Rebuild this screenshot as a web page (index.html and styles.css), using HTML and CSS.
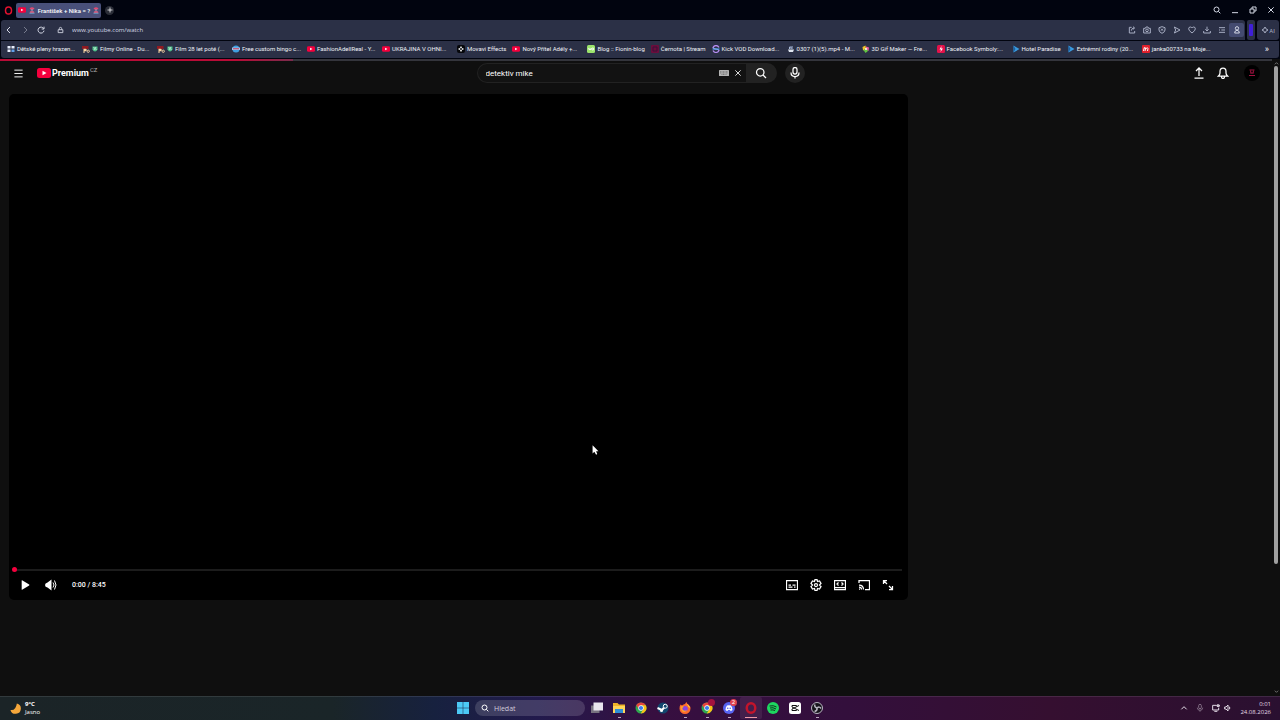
FILE: index.html
```html
<!DOCTYPE html>
<html lang="cs">
<head>
    <meta charset="UTF-8">
    <meta name="viewport" content="width=device-width, initial-scale=1.0">
    <title>František + Nika = ?</title>
    <link rel="stylesheet" href="styles.css">
</head>
<body>

<svg class="sprite" aria-hidden="true">
    <symbol id="yt" viewBox="0 0 28 20">
        <rect width="28" height="20" rx="5" fill="#f5003d"/>
        <path d="M11 5.5v9l8-4.5z" fill="#fff"/>
    </symbol>
    <symbol id="beach" viewBox="0 0 12 14">
        <path d="M1 3q5-5 10 0l-2 2H3z" fill="#e04a72"/>
        <path d="M6 4v7" stroke="#d9c9d8" stroke-width="1.4"/>
        <path d="M3 8h6l2 4H1z" fill="#c85c80"/>
        <path d="M1 12.6h10" stroke="#79b4dc" stroke-width="1.4"/>
    </symbol>
    <symbol id="po" viewBox="0 0 16 16">
        <path d="M0 2h13v6H0z" fill="#8f1a22"/>
        <path d="M3 7.5h4a2 2 0 0 1 0 5H5V16H3z" fill="#ffd9a5"/>
        <circle cx="12.5" cy="12.500" r="2.300" fill="none" stroke="#ffd9a5" stroke-width="1.800"/>
    </symbol>
    <symbol id="leaf" viewBox="0 0 12 12">
        <path d="M1 1h10v6q-2 4-5 4T1 7z" fill="#4fc08a"/>
        <path d="M3 2l6 6M8 2L4 8" stroke="#d8f4e4" stroke-width="1.4"/>
    </symbol>
    <symbol id="prima" viewBox="0 0 16 16">
        <path d="M3 1l12 7-12 7z" fill="#3a9be0"/>
        <path d="M3 1v14l4-7z" fill="#1d5f9e"/>
    </symbol>
    <symbol id="chrome" viewBox="0 0 24 24">
        <circle cx="12" cy="12" r="11" fill="#2fa84f"/>
        <path d="M2.5 6.5A11 11 0 0 1 21.5 6.5L12 7 7.6 14.5z" fill="#e8453c"/>
        <path d="M21.5 6.5A11 11 0 0 1 11.5 23L16.5 14.5 12 6.5z" fill="#fbc116"/>
        <circle cx="12" cy="12" r="5.4" fill="#fff"/>
        <circle cx="12" cy="12" r="4.2" fill="#3b7ded"/>
    </symbol>
    <symbol id="lens" viewBox="0 0 24 24">
        <circle cx="10.5" cy="10.5" r="7.5"/>
        <path d="M16 16l6 6"/>
    </symbol>
    <symbol id="cross" viewBox="0 0 24 24">
        <path d="M4 4l16 16M20 4L4 20"/>
    </symbol>
</svg>

<header class="browser">
    <div class="tabs">
        <button class="menu-opera" aria-label="Opera"><svg viewBox="0 0 24 24"><ellipse cx="12" cy="12" rx="8" ry="9.5" fill="none" stroke="#e3122f" stroke-width="4"/></svg></button>
        <div class="tab">
            <svg class="tab-icon"><use href="#yt"/></svg>
            <svg class="emoji"><use href="#beach"/></svg>
            <span>František + Nika = ?</span>
            <svg class="emoji"><use href="#beach"/></svg>
        </div>
        <button class="new-tab" aria-label="Nová karta"><svg class="line" viewBox="0 0 24 24"><path d="M12 2v20M2 12h20"/></svg></button>
        <div class="window-buttons">
            <button aria-label="Hledat karty"><svg class="line"><use href="#lens"/></svg></button>
            <button aria-label="Minimalizovat"><svg class="line" viewBox="0 0 24 24"><path d="M3 20h18"/></svg></button>
            <button aria-label="Obnovit"><svg class="line" viewBox="0 0 24 24"><path d="M3 9h12v12H3zM9 9V3h12v12h-6"/></svg></button>
            <button aria-label="Zavřít"><svg class="line"><use href="#cross"/></svg></button>
        </div>
    </div>

    <div class="toolbar">
        <div class="address">
            <button aria-label="Zpět"><svg class="line" viewBox="0 0 24 24"><path d="M15 3l-9 9 9 9"/></svg></button>
            <button class="dim" aria-label="Vpřed"><svg class="line" viewBox="0 0 24 24"><path d="M9 3l9 9-9 9"/></svg></button>
            <button aria-label="Obnovit stránku"><svg class="line" viewBox="0 0 24 24"><path d="M20 8a9 9 0 1 0 1 6M21 2v7h-7"/></svg></button>
            <svg class="line lock" viewBox="0 0 24 24"><path d="M4 11h16v10H4zM8 11V7q0-4 4-4t4 4v4"/></svg>
            <input class="url" type="text" value="www.youtube.com/watch" aria-label="Adresa">
            <div class="tools">
                <button aria-label="Upravit"><svg class="line" viewBox="0 0 24 24"><path d="M11 4H4v17h16v-6M10 14q0-7 8-8M15 2l5 4-5 4"/></svg></button>
                <button aria-label="Snímek"><svg class="line" viewBox="0 0 24 24"><path d="M2 7h5l2-4h6l2 4h5v14H2z"/><circle cx="12" cy="13" r="4"/></svg></button>
                <button aria-label="Blokování"><svg class="line" viewBox="0 0 24 24"><path d="M12 2l9 3v7q0 6-9 10-9-4-9-10V5z"/><path d="M9 8l6 6M15 8l-6 6"/></svg></button>
                <button aria-label="Tok"><svg class="line" viewBox="0 0 24 24"><path d="M4 3l17 9-17 9 4-9z"/></svg></button>
                <button aria-label="Oblíbené"><svg class="line" viewBox="0 0 24 24"><path d="M12 21Q2 14 2 8.500 2 3 7 3q3 0 5 3 2-3 5-3 5 0 5 5.500Q22 14 12 21z"/></svg></button>
                <button aria-label="Stahování"><svg class="line" viewBox="0 0 24 24"><path d="M12 2v13M7 10l5 5 5-5M2 15v6h20v-6"/></svg></button>
                <button aria-label="Seznam"><svg class="line" viewBox="0 0 24 24"><path d="M3 5h18M3 12h3M10 12h11M3 19h18"/></svg></button>
                <button class="profile" aria-label="Profil"><svg class="line" viewBox="0 0 24 24"><circle cx="12" cy="7" r="5"/><path d="M5 21q0-8 7-8t7 8z"/></svg></button>
            </div>
        </div>
        <div class="stripe"></div>
        <button class="ai"><svg class="line" viewBox="0 0 24 24"><path d="M12 3q2 7 9 9-7 2-9 9-2-7-9-9 7-2 9-9z"/></svg>AI</button>
    </div>

    <nav class="bookmarks">
        <a href="#" class="cut"><svg viewBox="0 0 16 16"><path d="M1 2h6v5H1zM9 2h6v5H9zM1 9h6v5H1z" fill="#e8eefc"/><path d="M9 9h6v5H9z" fill="#62a0ea"/></svg><span>Dětské pleny hrazen...</span></a>
        <a href="#" class="cut"><svg><use href="#po"/></svg><svg class="leaf"><use href="#leaf"/></svg><span>Filmy Online - Du...</span></a>
        <a href="#" class="cut"><svg><use href="#po"/></svg><svg class="leaf"><use href="#leaf"/></svg><span>Film 28 let poté (...</span></a>
        <a href="#" class="cut"><svg viewBox="0 0 16 16"><circle cx="8" cy="8" r="7" fill="#3f9fe0"/><path d="M0 5h16v5H0z" fill="#9cc6ee"/><path d="M2 7.500h12" stroke="#d33a55" stroke-width="2"/></svg><span>Free custom bingo c...</span></a>
        <a href="#" class="cut"><svg><use href="#yt"/></svg><span>FashionAdellReal - Y...</span></a>
        <a href="#" class="cut"><svg><use href="#yt"/></svg><span>UKRAJINA V OHNI...</span></a>
        <a href="#"><svg viewBox="0 0 16 16"><rect width="16" height="16" rx="4" fill="#05060a"/><path d="M8 2l2 3-2 2-2-2zM8 9l2 2-2 3-2-3zM2 8l3-2 2 2-2 2zM9 8l2-2 3 2-3 2z" fill="#fff"/></svg><span>Movavi Effects</span></a>
        <a href="#" class="cut"><svg><use href="#yt"/></svg><span>Nový Přítel Adély +...</span></a>
        <a href="#"><svg viewBox="0 0 16 16"><rect width="16" height="16" rx="3" fill="#9be36c"/><path d="M3 6l1.500 4L6 7l1.500 3L9 6M13 6h-3v4h3z" fill="none" stroke="#fff" stroke-width="1.500"/></svg><span>Blog :: Fionin-blog</span></a>
        <a href="#"><svg viewBox="0 0 16 16"><rect width="16" height="16" rx="2" fill="#6b0d3c"/><path d="M4 4h8v8H4z" fill="none" stroke="#3a1238" stroke-width="2"/></svg><span>Černota | Stream</span></a>
        <a href="#" class="cut"><svg viewBox="0 0 16 16"><path d="M14 5q-2-4-6-4T2 5q1 3 6 3t6 3q-2 4-6 4t-6-4" fill="none" stroke="#b58cf0" stroke-width="2.500"/><path d="M1 8h14" stroke="#41b4ee" stroke-width="2"/></svg><span>Kick VOD Download...</span></a>
        <a href="#" class="cut"><svg viewBox="0 0 16 16"><path d="M2 9h12l-2 5H4z" fill="#dfe5ef"/><path d="M5 8V4h3v4M10 8V2" stroke="#a9b9d8" stroke-width="2" fill="none"/></svg><span>0307 (1)(5).mp4 - M...</span></a>
        <a href="#" class="cut"><svg viewBox="0 0 16 16"><path d="M1 4l6-3 1 7-6 3z" fill="#f3c529"/><path d="M8 3l6 2-1 7-5-2z" fill="#ec5b9a"/><path d="M3 10l6-3 3 5-5 4z" fill="#62c544"/><circle cx="8" cy="8" r="2" fill="#fff"/></svg><span>3D Gif Maker — Fre...</span></a>
        <a href="#" class="cut"><svg viewBox="0 0 16 16"><rect width="16" height="16" rx="3" fill="#e4124a"/><path d="M9 2L5 9h3l-1 5 5-7H8.500z" fill="#fff"/></svg><span>Facebook Symboly:...</span></a>
        <a href="#"><svg><use href="#prima"/></svg><span>Hotel Paradise</span></a>
        <a href="#" class="cut"><svg><use href="#prima"/></svg><span>Extrémní rodiny (20...</span></a>
        <a href="#" class="cut"><svg viewBox="0 0 16 16"><rect width="16" height="16" rx="2" fill="#e0202c"/><path d="M3 12l1.500-7M4 6q4-2 3 2l-1 4M8 7q4-3 4 0l-1 5" fill="none" stroke="#fff" stroke-width="2"/></svg><span>janka00733 na Moje...</span></a>
        <button class="more" aria-label="Další záložky">»</button>
    </nav>
</header>

<div class="viewport">
    <div class="page">
        <div class="loading"><div class="loading-done"></div></div>

        <div class="masthead">
            <div class="masthead-start">
                <button class="burger" aria-label="Průvodce"><svg class="line" viewBox="0 0 24 24"><path d="M1 3h22M1 12h22M1 21h22"/></svg></button>
                <a class="logo" href="#"><svg><use href="#yt"/></svg><span>Premium</span><sup>CZ</sup></a>
            </div>
            <form class="search">
                <div class="search-box">
                    <input type="text" value="detektiv mike" aria-label="Hledat">
                    <svg class="keyboard" viewBox="0 0 20 12"><rect width="20" height="12" rx="1" fill="#b4b4b4"/><path d="M2 3.500h16M2 6h16M5 9h10" stroke="#444" stroke-width="1" stroke-dasharray="2 1"/></svg>
                    <button type="button" class="clear" aria-label="Vymazat"><svg class="line"><use href="#cross"/></svg></button>
                </div>
                <button type="button" class="search-go" aria-label="Hledat"><svg class="line"><use href="#lens"/></svg></button>
                <button type="button" class="mic" aria-label="Hlasové hledání"><svg class="line" viewBox="0 0 24 24"><rect x="8" y="1" width="8" height="13" rx="4"/><path d="M4 11q0 8 8 8t8-8M12 19v4"/></svg></button>
            </form>
            <div class="masthead-end">
                <button aria-label="Nahrát"><svg class="line" viewBox="0 0 24 24"><path d="M12 18V2M6 8l6-6 6 6M3 22h18"/></svg></button>
                <button aria-label="Oznámení"><svg class="line" viewBox="0 0 24 24"><path d="M3 18q3-3 3-6V9q0-7 6-7t6 7v3q0 3 3 6zM9 19q0 4 3 4t3-4"/></svg></button>
                <button class="avatar" aria-label="Účet"><svg viewBox="0 0 16 16"><path d="M3 2h10M5 3l1 6M11 3l-1 6M5 8h6M2 13h12" fill="none" stroke="#a01240" stroke-width="2"/></svg></button>
            </div>
        </div>

        <main class="watch">
            <div class="player">
                <div class="seek"><span class="knob"></span></div>
                <div class="controls">
                    <button class="play" aria-label="Přehrát"><svg viewBox="0 0 24 24"><path d="M4 2q0-2 2-1l16 10q1 1 0 2L6 23q-2 1-2-1z" fill="#fff"/></svg></button>
                    <button class="volume" aria-label="Ztlumit"><svg viewBox="0 0 24 24"><path d="M13 1v22L5 17Q0 16 0 12t5-5z" fill="#fff"/><path d="M16 7q4 5 0 10M19 3q6 9 0 18" fill="none" stroke="#fff" stroke-width="2"/></svg></button>
                    <span class="time">0:00 / 8:45</span>
                    <div class="controls-end">
                        <button aria-label="Titulky"><svg class="line" viewBox="0 0 24 24"><path d="M1 3h22v18H1zM5 12h5M13 12h6M5 16h8M16 16h3"/></svg></button>
                        <button aria-label="Nastavení"><svg class="line" viewBox="0 0 24 24"><path d="M10 1h4l1 4 4-1 3 5-3 3 3 3-3 5-4-1-1 4h-4l-1-4-4 1-3-5 3-3-3-3 3-5 4 1z"/><circle cx="12" cy="12" r="3"/></svg></button>
                        <button aria-label="Režim kina"><svg class="line" viewBox="0 0 24 24"><path d="M1 3h22v18H1zM1 17h22M9 7l-3 3 3 3M15 7l3 3-3 3"/></svg></button>
                        <button aria-label="Odeslat"><svg class="line" viewBox="0 0 24 24"><path d="M2 8V3h21v18h-9M2 12q9 0 9 9M2 16q5 0 5 5M2 20h2"/></svg></button>
                        <button aria-label="Celá obrazovka"><svg class="line" viewBox="0 0 24 24"><path d="M3 10V3h7M3 3l7 7M21 14v7h-7M21 21l-7-7"/></svg></button>
                    </div>
                </div>
            </div>
            <aside class="related"></aside>
        </main>
    </div>
    <div class="scrollbar">
        <svg class="line" viewBox="0 0 24 24"><path d="M4 16l8-8 8 8"/></svg>
        <div class="track"><div class="thumb"></div></div>
        <svg class="line" viewBox="0 0 24 24"><path d="M4 8l8 8 8-8"/></svg>
    </div>
</div>

<footer class="taskbar">
    <div class="weather">
        <svg viewBox="0 0 24 24"><path d="M15 1a11.500 11.500 0 1 1-14 14q11 3 14-14z" fill="#f5a73b"/></svg>
        <div><b>9°C</b><br>Jasno</div>
    </div>
    <div class="apps">
        <button aria-label="Start"><svg viewBox="0 0 24 24"><path d="M0 0h11.500v11.500H0zM12.500 0H24v11.500H12.500zM0 12.500h11.500V24H0zM12.500 12.500H24V24H12.500z" fill="#4cc9f5"/></svg></button>
        <label class="find"><svg class="line"><use href="#lens"/></svg><input type="text" placeholder="Hledat" aria-label="Hledat"></label>
        <button aria-label="Zobrazení úloh"><svg viewBox="0 0 24 24"><path d="M0 7h17v15H0z" fill="#77727f"/><path d="M5 1h19v16H5z" fill="#e9e6ee"/></svg></button>
        <button class="open" aria-label="Průzkumník"><svg viewBox="0 0 24 24"><path d="M0 2h9l3 3h12v17H0z" fill="#f0b429"/><path d="M0 8h24v14H0z" fill="#ffd55a"/><path d="M4 14h16v8H4z" fill="#2f8fd8"/></svg></button>
        <button aria-label="Chrome"><svg><use href="#chrome"/></svg></button>
        <button aria-label="Steam"><svg viewBox="0 0 24 24"><circle cx="12" cy="12" r="11" fill="#12476f"/><path d="M1 12l9 4 6-7" fill="none" stroke="#fff" stroke-width="4"/><circle cx="16.500" cy="8.500" r="4" fill="#12476f" stroke="#fff" stroke-width="2"/><circle cx="9" cy="17" r="3" fill="#fff"/></svg></button>
        <button class="open" aria-label="Firefox"><svg viewBox="0 0 24 24"><path d="M3 5l3 2q3-3 6-3 1-2 3-4 1 4 4 5 4 4 4 8a11 11 0 0 1-22 0q0-5 2-8z" fill="#ff6b2c"/><path d="M14 3q8 4 8 9l-3-2q-1-4-5-7z" fill="#ffd43a"/><circle cx="12" cy="13.500" r="5.500" fill="#8a46e0"/><path d="M3 9q4-2 7 1-5 1-3 5 3 4 9 1-3 6-9 3-5-4-4-10z" fill="#ffa32b"/></svg></button>
        <button class="open" aria-label="Chrome, profil"><svg><use href="#chrome"/></svg><span class="badge"></span></button>
        <button class="open" aria-label="Discord"><svg viewBox="0 0 24 24"><circle cx="12" cy="12" r="12" fill="#5865f2"/><path d="M5 16q0-6 3-9 4-1 8 0 3 3 3 9-2 2-4 2l-1-2h-4l-1 2q-2 0-4-2z" fill="#fff"/><circle cx="9.500" cy="12.500" r="1.600" fill="#5865f2"/><circle cx="14.500" cy="12.500" r="1.600" fill="#5865f2"/></svg><span class="badge bright">2</span></button>
        <button class="active" aria-label="Opera"><svg viewBox="0 0 24 24"><ellipse cx="12" cy="12" rx="8.500" ry="9.500" fill="none" stroke="#c3142b" stroke-width="5"/></svg></button>
        <button aria-label="Spotify"><svg viewBox="0 0 24 24"><circle cx="12" cy="12" r="12" fill="#1ed760"/><path d="M5 8q8-2 14 2M6 12q6-2 12 2M7 16q5-1 9 1" fill="none" stroke="#10321c" stroke-width="2"/></svg></button>
        <button aria-label="CapCut"><svg viewBox="0 0 24 24"><rect width="24" height="24" rx="5" fill="#fff"/><path d="M15 9V7H6v3l14 7M15 15v2H6v-3l14-7" fill="none" stroke="#111" stroke-width="2"/></svg></button>
        <button class="open" aria-label="OBS"><svg viewBox="0 0 24 24"><circle cx="12" cy="12" r="11" fill="#17151c" stroke="#b9b5c2" stroke-width="2"/><path d="M12 12q-6-2-4-7M12 12q5-4 8 1M12 12q1 6-5 7" fill="none" stroke="#b9b5c2" stroke-width="3"/></svg></button>
    </div>
    <div class="tray">
        <svg class="line" viewBox="0 0 24 24"><path d="M4 16l8-8 8 8"/></svg>
        <svg class="line dim" viewBox="0 0 24 24"><rect x="8" y="1" width="8" height="13" rx="4"/><path d="M4 11q0 8 8 8t8-8M12 19v4"/></svg>
        <div class="net">
            <svg class="line" viewBox="0 0 24 24"><path d="M14 4H2v14h18v-7M7 22h9M18 1v8M15 3h7v4h-7z"/></svg>
            <svg class="line" viewBox="0 0 24 24"><path d="M2 9h4l6-6v18l-6-6H2zM16 8q3 4 0 8"/></svg>
        </div>
        <div class="clock">0:01<br>24.08.2026</div>
    </div>
</footer>

<svg class="cursor" viewBox="0 0 12 18"><path d="M1 1v14l3-3 3 5 2-1-2-5h4z" fill="#fff"/></svg>

</body>
</html>
```
FILE: styles.css
```css
* {
    box-sizing: border-box;
}
body {
    margin: 0;
    height: 100vh;
    display: flex;
    flex-direction: column;
    background: #0f0f0f;
    color: #fff;
    font-family: "Open Sans", "Noto Sans", sans-serif;
    font-size: 6px;
    overflow: hidden;
}
button {
    display: flex;
    align-items: center;
    justify-content: center;
    padding: 0;
    border: none;
    background: none;
    color: inherit;
    font: inherit;
    cursor: pointer;
}
input {
    min-width: 0;
    padding: 0;
    border: none;
    outline: none;
    background: none;
    color: inherit;
    font: inherit;
}
a {
    color: inherit;
    text-decoration: none;
}
svg {
    display: block;
    flex: none;
    width: 8px;
    height: 8px;
}
.sprite {
    position: absolute;
    width: 0;
    height: 0;
}
.line {
    fill: none;
    stroke: currentColor;
    stroke-width: 3;
}
.dim {
    opacity: 0.45;
}

/* browser chrome */
.browser {
    background: #01040f;
    color: #d3d7e4;
    font-family: Roboto, sans-serif;
}
.tabs {
    display: flex;
    align-items: center;
    height: 20px;
    padding-left: 4px;
}
.menu-opera {
    margin-right: 3px;
}
.menu-opera svg {
    width: 9px;
    height: 9px;
}
.tab {
    display: flex;
    align-items: center;
    justify-content: space-between;
    width: 85px;
    height: 15px;
    padding: 0 2px;
    border-radius: 2px;
    background: #49507a;
    color: #fff;
    font-weight: 500;
    white-space: nowrap;
}
.tab-icon {
    height: 6px;
}
.emoji {
    width: 6px;
    height: 7px;
}
.new-tab {
    width: 9px;
    height: 9px;
    margin-left: 4px;
    border-radius: 50%;
    background: #2b2e38;
    color: #fff;
}
.new-tab svg {
    width: 6px;
    height: 6px;
}
.window-buttons {
    display: flex;
    margin-left: auto;
}
.window-buttons button {
    width: 18px;
    height: 20px;
}
.toolbar {
    display: flex;
    gap: 2px;
    height: 20px;
    padding: 0 1px;
}
.address {
    flex: 1;
    display: flex;
    align-items: center;
    border-radius: 3px 3px 0 0;
    background: #2b3046;
}
.address > button {
    width: 16px;
    height: 16px;
}
.address .lock {
    width: 7px;
    margin: 0 8px;
}
.url {
    flex: 1;
    font-family: "Open Sans", "Noto Sans", sans-serif;
}
.tools {
    display: flex;
    padding-right: 1px;
    color: #a7adc2;
}
.tools button {
    width: 15px;
    height: 14px;
}
.tools .profile {
    border-radius: 2px;
    background: #444b70;
    color: #d3d7e4;
}
.stripe {
    width: 8px;
    padding: 4px 2px;
    border-radius: 2px;
    background: #2b3046;
}
.stripe::before {
    content: "";
    display: block;
    height: 12px;
    border-radius: 1px;
    background: #3f1fd8;
}
.ai {
    width: 22px;
    border-radius: 3px;
    background: #2b3046;
    color: #a7adc2;
}
.bookmarks {
    display: flex;
    align-items: center;
    gap: 6px;
    height: 17px;
    margin: 1px;
    padding: 0 10px 2px 6px;
    border-radius: 0 0 3px 3px;
    background: #2b3046;
    color: #f0f2f8;
}
.bookmarks a {
    display: flex;
    align-items: center;
    gap: 2px;
    white-space: nowrap;
}
.bookmarks .cut {
    width: 69px;
}
.bookmarks .leaf {
    width: 6px;
}
.more {
    margin-left: auto;
    font-size: 9px;
}

/* web page */
.viewport {
    flex: 1;
    display: flex;
    min-height: 0;
    font-family: Roboto, sans-serif;
}
.page {
    flex: 1;
    min-width: 0;
}
.page .line {
    stroke-width: 2.5;
}
.loading {
    height: 2px;
    background: #34353c;
}
.loading-done {
    width: 23%;
    height: 2px;
    background: linear-gradient(90deg, #b80c36 80%, #7a2c4c);
}
.masthead {
    display: grid;
    grid-template-columns: 1fr 328px 1fr;
    align-items: center;
    height: 24px;
    padding: 0 5px 0 14px;
}
.masthead-start,
.logo,
.search,
.search-box,
.masthead-end {
    display: flex;
    align-items: center;
}
.logo {
    gap: 1px;
    margin-left: 14px;
    font-size: 9px;
    font-weight: 700;
}
.logo svg {
    width: 14px;
    height: 10px;
}
.logo sup {
    align-self: flex-start;
    color: #aaa;
    font-size: 6px;
    font-weight: 400;
    line-height: 3px;
}
.burger svg {
    width: 9px;
    height: 9px;
}
.search-box {
    flex: 1;
    height: 20px;
    padding: 0 4px 0 8px;
    border: 1px solid #222;
    border-right: none;
    border-radius: 10px 0 0 10px;
    background: #121212;
}
.search-box input {
    flex: 1;
    font-size: 8px;
}
.keyboard {
    width: 10px;
    height: 6px;
    margin-right: 5px;
}
.search-go {
    width: 31px;
    height: 20px;
    border-radius: 0 10px 10px 0;
    background: #222;
}
.search-go svg,
.mic svg,
.masthead-end svg {
    width: 12px;
    height: 12px;
}
.mic {
    width: 20px;
    height: 20px;
    margin-left: 8px;
    border-radius: 50%;
    background: #222;
}
.masthead-end {
    justify-content: flex-end;
    padding-right: 7px;
}
.masthead-end button {
    width: 24px;
    height: 24px;
}
.masthead-end .avatar {
    width: 16px;
    height: 16px;
    margin-left: 9px;
    border-radius: 50%;
    background: #000;
}
.masthead-end .avatar svg {
    width: 8px;
    height: 8px;
}
.watch {
    display: flex;
    gap: 24px;
    padding: 9px 0 0 9px;
}
.player {
    flex: 1;
    display: flex;
    flex-direction: column;
    justify-content: flex-end;
    aspect-ratio: 16 / 9;
    padding: 0 6px;
    border-radius: 5px;
    background: #000;
}
.related {
    width: 340px;
}
.seek {
    display: flex;
    align-items: center;
    height: 2px;
    background: #1c1c1c;
}
.knob {
    width: 5px;
    height: 5px;
    margin-left: -3px;
    border-radius: 50%;
    background: #f5003d;
}
.controls {
    display: flex;
    align-items: center;
    height: 29px;
    font-size: 7px;
    font-weight: 500;
}
.play {
    width: 20px;
}
.volume {
    width: 32px;
}
.play svg {
    width: 10px;
    height: 10px;
}
.volume svg {
    width: 12px;
    height: 12px;
}
.time {
    margin-left: 5px;
}
.controls-end {
    display: flex;
    margin-left: auto;
    padding-right: 2px;
}
.controls-end button {
    width: 24px;
}
.controls-end svg {
    width: 12px;
    height: 12px;
}
.scrollbar {
    display: flex;
    flex-direction: column;
    align-items: center;
    width: 8px;
    padding: 2px 0;
    color: #aaa;
}
.scrollbar svg {
    width: 5px;
    height: 5px;
}
.track {
    flex: 1;
}
.thumb {
    width: 4px;
    height: 80%;
    border-radius: 2px;
    background: #a0a0a0;
}

/* taskbar */
.taskbar {
    display: grid;
    grid-template-columns: 1fr auto 1fr;
    align-items: center;
    height: 24px;
    box-shadow: inset 0 1px #ffffff1a;
    background: linear-gradient(90deg, #1b2427 0%, #1a2528 26%, #17213f 34%, #221a4c 42%, #370f40 51%, #330f3c 66%, #350f30 82%, #2a1030 100%);
}
.weather {
    display: flex;
    align-items: center;
    gap: 4px;
    padding-left: 10px;
    line-height: 8px;
}
.weather svg {
    width: 11px;
    height: 11px;
}
.apps {
    display: flex;
    align-items: center;
}
.apps button {
    position: relative;
    width: 22px;
    height: 22px;
}
.apps button svg {
    width: 12px;
    height: 12px;
}
.find {
    display: flex;
    align-items: center;
    gap: 5px;
    width: 110px;
    height: 16px;
    margin: 0 1px;
    padding: 0 6px;
    border-radius: 8px;
    background: #ffffff26;
    font-size: 7px;
}
.find input::placeholder {
    color: #d2cbdc;
    opacity: 1;
}
.open::after,
.active::after {
    content: "";
    position: absolute;
    bottom: 1px;
    width: 3px;
    height: 1px;
    background: #b9a6bd;
}
.apps .active {
    border-radius: 2px;
    background: #ffffff12;
}
.active::after {
    width: 12px;
    background: #ef9aa8;
}
.badge {
    position: absolute;
    top: 2px;
    right: 3px;
    width: 7px;
    height: 7px;
    border-radius: 50%;
    background: #a3123f;
    font-size: 6px;
    line-height: 7px;
}
.bright {
    background: #e0434f;
}
.tray {
    display: flex;
    align-items: center;
    justify-content: flex-end;
    gap: 8px;
    padding-right: 9px;
    color: #e3dbe6;
}
.net {
    display: flex;
    gap: 4px;
}
.clock {
    line-height: 8px;
    text-align: right;
}

.cursor {
    position: absolute;
    top: 444px;
    left: 592px;
    width: 7px;
    height: 12px;
}
```
